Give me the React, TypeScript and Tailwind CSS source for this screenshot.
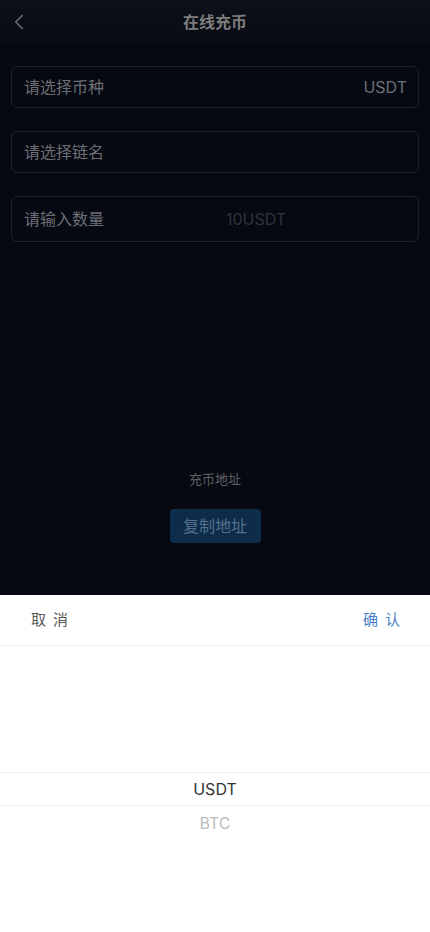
import { ChevronLeft } from "lucide-react";

const FONT = "font-['Inter','Noto_Sans_CJK_SC',sans-serif]";

function Field({ label, right, hint, tall }: { label: string; right?: string; hint?: string; tall?: boolean }) {
    return (
        <div
            className={`flex items-center rounded-[6px] border border-[#1b212c] px-[12px] ${tall ? "h-[46px]" : "h-[42px]"}`}
        >
            <span className="w-[202px] text-[16px] text-[#6c6f76]">{label}</span>
            {hint && <span className="text-[16px] text-[#2f333b]">{hint}</span>}
            {right && <span className="ml-[auto] mr-[-1px] text-[16px] text-[#6c6f76]">{right}</span>}
        </div>
    );
}

export default function App() {
    return (
        <div className={`flex h-[932px] w-[430px] flex-col overflow-hidden bg-[#060911] ${FONT}`}>
            {/* Page (dimmed by mask) */}
            <div className="flex h-[595px] flex-col bg-[#060911]">
                {/* Header */}
                <div className="grid h-[44px] grid-cols-[44px_1fr_44px] items-center bg-gradient-to-b from-[#0c1018] to-[#080b13]">
                    <ChevronLeft className="ml-[6px] h-[26px] w-[26px] text-[#6a6d73]" strokeWidth={1.5} />
                    <div className="text-center text-[16px] font-bold text-[#7d7d7d]">在线充币</div>
                    <div />
                </div>

                {/* Form */}
                <div className="mx-[11px] mt-[22px] flex flex-col gap-[23px]">
                    <Field label="请选择币种" right="USDT" />
                    <Field label="请选择链名" />
                    <Field label="请输入数量" hint="10USDT" tall />
                </div>

                {/* Address */}
                <div className="mt-[228px] flex flex-col items-center">
                    <div className="text-[13px] text-[#5f6166]">充币地址</div>
                    <button className="mt-[19px] h-[34px] w-[91px] rounded-[4px] bg-[#0d2d4a] text-[16px] text-[#53718b]">
                        复制地址
                    </button>
                </div>
            </div>

            {/* Picker popup */}
            <div className="flex h-[337px] flex-col bg-white">
                <div className="flex h-[51px] items-center justify-between border-b border-[#ededed] pl-[31px] pr-[23px]">
                    <span className="text-[15px] tracking-[7px] text-[#555]">取消</span>
                    <span className="text-[15px] tracking-[7px] text-[#4a7fc9]">确认</span>
                </div>
                <div className="flex flex-1 flex-col">
                    <div className="h-[126px]" />
                    <div className="flex h-[34px] items-center justify-center border-y border-[#ededed] text-[16px] text-[#333]">
                        USDT
                    </div>
                    <div className="flex h-[34px] items-center justify-center text-[16px] text-[#bdbdbd]">BTC</div>
                </div>
            </div>
        </div>
    );
}
